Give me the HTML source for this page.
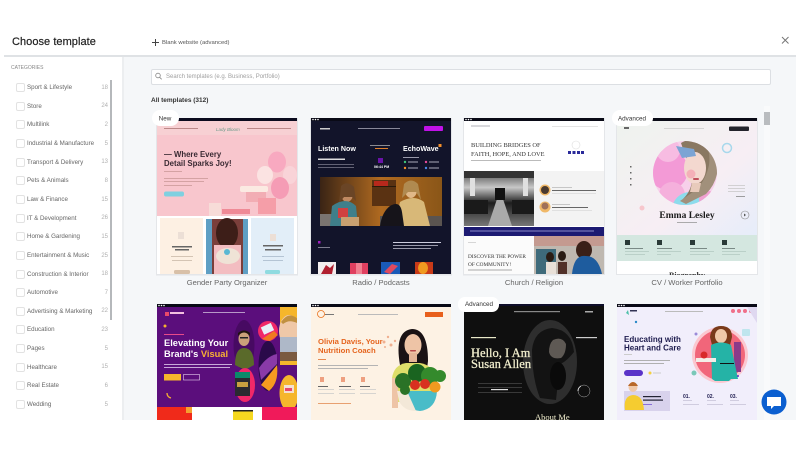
<!DOCTYPE html>
<html><head><meta charset="utf-8"><style>
html,body{margin:0;padding:0;width:800px;height:450px;overflow:hidden;background:#fff;font-family:"Liberation Sans",sans-serif}
#w{position:absolute;left:0;top:0;width:800px;height:450px;filter:blur(.35px)}
.a{position:absolute}
#main{left:124px;top:57px;width:672px;height:363px;background:#f5f7f9}
#rule{left:4px;top:55px;width:792px;height:2px;background:#dfe2e5}
#sidesep{left:122px;top:57px;width:2px;height:363px;background:#eceef0}
#h{left:12px;top:36px;font-size:11px;line-height:13px;color:#222;letter-spacing:.05px;-webkit-text-stroke:.2px #222}
#blank{left:162px;top:38.500px;font-size:5.900px;line-height:8px;color:#555}
#cat{left:11px;top:65px;font-size:5px;line-height:7px;color:#888}
#search{left:151px;top:69px;width:618px;height:14px;background:#fff;border:1px solid #dcdfe3;border-radius:2px}
#search span{position:absolute;left:14px;top:3px;font-size:6px;line-height:8px;color:#a0a0a0}
#all{left:151px;top:96px;font-size:6.500px;line-height:9px;color:#333;font-weight:bold}
.r{position:absolute;left:16px;width:92px;height:9px}
.r i{position:absolute;left:0;top:0;width:7px;height:7px;border:1px solid #e2e2e2;border-radius:2px;background:#fff}
.r b{position:absolute;left:11px;top:0;font-weight:normal;font-size:6.200px;line-height:9px;color:#666;white-space:nowrap}
.r u{position:absolute;right:0;top:.5px;text-decoration:none;font-size:6px;line-height:9px;color:#b0b0b0}
#sb{left:110px;top:80px;width:2px;height:240px;background:#b5b8bb}
.cap{position:absolute;width:140px;text-align:center;font-size:7.600px;line-height:10px;color:#666}
#track{left:764px;top:106px;width:6px;height:314px;background:#f9fafb}
#thumb{left:764px;top:112px;width:6px;height:13px;background:#b9bcbf}
svg{position:absolute;left:0;top:0}
</style></head><body><div id="w">
<div class="a" id="main"></div><div class="a" id="rule"></div><div class="a" id="sidesep"></div>
<div class="a" id="h">Choose template</div>
<div class="a" id="blank">Blank website (advanced)</div>
<svg width="800" height="60" style="z-index:2"><path d="M155.500 39v7M152 42.500h7" stroke="#444" stroke-width="1"/><path d="M782 37l6.500 6.500M788.500 37l-6.500 6.500" stroke="#777" stroke-width="1"/></svg>
<div class="a" id="cat">CATEGORIES</div>
<div class="a" id="search"><span>Search templates (e.g. Business, Portfolio)</span></div>
<svg width="800" height="90" style="z-index:2"><circle cx="158" cy="75.500" r="2.300" fill="none" stroke="#888" stroke-width=".8"/><path d="M159.700 77.300l2 2" stroke="#888" stroke-width=".8"/></svg>
<div class="a" id="all">All templates (312)</div>
<div class="a" id="sb"></div>
<div class="r" style="top:83px"><i></i><b>Sport &amp; Lifestyle</b><u>18</u></div>
<div class="r" style="top:101.500px"><i></i><b>Store</b><u>24</u></div>
<div class="r" style="top:120px"><i></i><b>Multilink</b><u>2</u></div>
<div class="r" style="top:139px"><i></i><b>Industrial &amp; Manufacture</b><u>5</u></div>
<div class="r" style="top:157.500px"><i></i><b>Transport &amp; Delivery</b><u>13</u></div>
<div class="r" style="top:176px"><i></i><b>Pets &amp; Animals</b><u>8</u></div>
<div class="r" style="top:195px"><i></i><b>Law &amp; Finance</b><u>15</u></div>
<div class="r" style="top:213.500px"><i></i><b>IT &amp; Development</b><u>26</u></div>
<div class="r" style="top:232px"><i></i><b>Home &amp; Gardening</b><u>15</u></div>
<div class="r" style="top:251px"><i></i><b>Entertainment &amp; Music</b><u>25</u></div>
<div class="r" style="top:269.500px"><i></i><b>Construction &amp; Interior</b><u>18</u></div>
<div class="r" style="top:288px"><i></i><b>Automotive</b><u>7</u></div>
<div class="r" style="top:306.500px"><i></i><b>Advertising &amp; Marketing</b><u>22</u></div>
<div class="r" style="top:325px"><i></i><b>Education</b><u>23</u></div>
<div class="r" style="top:344px"><i></i><b>Pages</b><u>5</u></div>
<div class="r" style="top:362.500px"><i></i><b>Healthcare</b><u>15</u></div>
<div class="r" style="top:381px"><i></i><b>Real Estate</b><u>6</u></div>
<div class="r" style="top:400px"><i></i><b>Wedding</b><u>5</u></div>
<div class="a" id="track"></div><div class="a" id="thumb"></div>

<svg width="800" height="450">
<defs>
<clipPath id="c6"><rect x="311" y="304" width="140" height="116"/></clipPath>
<clipPath id="c8"><rect x="617" y="304" width="140" height="116"/></clipPath>
<clipPath id="c5"><rect x="157" y="304" width="140" height="116"/></clipPath>
<clipPath id="c7"><rect x="464" y="304" width="140" height="116"/></clipPath>
<clipPath id="c4"><circle cx="685" cy="173" r="32"/></clipPath>
<clipPath id="p2"><rect x="320" y="177" width="122" height="49"/></clipPath>
<linearGradient id="g4" x1="0" y1="0" x2="1" y2="1"><stop offset="0" stop-color="#eef3ee"/><stop offset=".6" stop-color="#f7eef4"/><stop offset="1" stop-color="#e6edfa"/></linearGradient>
<linearGradient id="g2" x1="0" y1="0" x2="1" y2="0"><stop offset="0" stop-color="#3a2415"/><stop offset=".5" stop-color="#b06a20"/><stop offset="1" stop-color="#8a5618"/></linearGradient>
<linearGradient id="gc" x1="0" y1="0" x2="0" y2="1"><stop offset="0" stop-color="#444"/><stop offset=".3" stop-color="#c8c8c8"/><stop offset=".58" stop-color="#1e1e1e"/><stop offset="1" stop-color="#777"/></linearGradient>
</defs>

<g fill="#e4e6e9"><rect x="156" y="118" width="142" height="157.500"/><rect x="310" y="118" width="142" height="157.500"/><rect x="463" y="118" width="142" height="157.500"/><rect x="616" y="118" width="142" height="157.500"/></g>

<!-- Card 1 -->
<rect x="157" y="118" width="140" height="156" fill="#fff"/>
<rect x="157" y="121" width="140" height="95" fill="#f8c6cd"/>
<rect x="157" y="121" width="140" height="14" fill="#f7d0d3"/>
<rect x="157" y="118" width="140" height="3" fill="#0b0b1e"/>
<rect x="164" y="128" width="34" height="1" fill="#b88"/><rect x="247" y="128" width="44" height="1" fill="#b88"/>
<text x="216" y="131" font-size="4.500" fill="#6a9a8a" font-style="italic">Lady Bloom</text>
<text x="164" y="157" font-size="7.800" font-weight="bold" fill="#3a2a33">— Where Every</text>
<text x="164" y="166" font-size="7.800" font-weight="bold" fill="#3a2a33">Detail Sparks Joy!</text>
<rect x="164" y="171" width="18" height=".8" fill="#c99"/>
<rect x="164" y="178" width="44" height=".8" fill="#c99"/><rect x="164" y="181" width="40" height=".8" fill="#c99"/><rect x="164" y="185" width="28" height=".8" fill="#c99"/>
<rect x="164" y="191.500" width="20" height="5" rx="2" fill="#7fd0e0"/>
<ellipse cx="277" cy="162" rx="9" ry="10.500" fill="#f8a9c0"/><ellipse cx="265" cy="175" rx="8" ry="9" fill="#fbe3e2"/><ellipse cx="290" cy="175" rx="7" ry="9" fill="#f9d3d8"/><ellipse cx="280" cy="188" rx="9" ry="11" fill="#f59cb5"/>
<rect x="240" y="186" width="28" height="6" rx="2" fill="#fbeae2"/><rect x="246" y="192" width="20" height="10" fill="#f2adb4"/>
<rect x="258" y="198" width="18" height="16" fill="#f59ea8"/><rect x="209" y="203" width="12" height="13" fill="#f7dcd8"/><rect x="222" y="209" width="28" height="5" fill="#ef8a96"/>
<rect x="160" y="218" width="43" height="56" fill="#fdf0e3"/>
<rect x="206" y="219" width="42" height="55" fill="#7b3f3b"/><rect x="206" y="219" width="6" height="55" fill="#5f9fc4"/><rect x="243" y="219" width="5" height="55" fill="#5f9fc4"/><ellipse cx="227" cy="233" rx="11" ry="15" fill="#3d1e18"/><rect x="214" y="245" width="27" height="29" fill="#f3bdc1"/><ellipse cx="228" cy="256" rx="12" ry="8" fill="#efe3d6"/><circle cx="227" cy="252" r="3" fill="#59b8d3"/>
<rect x="251" y="218" width="43" height="56" fill="#e2eef8"/>
<rect x="172" y="246" width="20" height="1.500" fill="#666"/><rect x="175" y="249" width="14" height="1.500" fill="#666"/><rect x="171" y="256" width="22" height="1" fill="#d4c4b4"/><rect x="172" y="260" width="20" height="1" fill="#d4c4b4"/>
<rect x="174" y="270" width="16" height="4" rx="1.500" fill="#d8c0a8"/>
<rect x="263" y="245" width="20" height="1.500" fill="#666"/><rect x="265" y="249" width="16" height="1.500" fill="#666"/><rect x="262" y="256" width="22" height="1" fill="#b4c4d4"/><rect x="263" y="260" width="20" height="1" fill="#b4c4d4"/>
<rect x="265" y="270" width="15" height="4" rx="1.500" fill="#8fdbe0"/>
<path d="M178 232h6v7h-6zM270 234h6v7h-6z" fill="#ecdfd6"/>

<!-- Card 2 -->
<rect x="311" y="118" width="140" height="156" fill="#12142a"/>
<rect x="311" y="118" width="140" height="3" fill="#090a16"/><circle cx="313" cy="119.500" r=".8" fill="#fff"/><circle cx="315.500" cy="119.500" r=".8" fill="#fff"/><circle cx="318" cy="119.500" r=".8" fill="#fff"/>
<rect x="320" y="128" width="10" height="1.500" fill="#ccc"/><rect x="358" y="128" width="42" height="1" fill="#889"/>
<rect x="424" y="126" width="19" height="5" rx="1" fill="#c012e8"/>
<text x="318" y="151" font-size="7.100" font-weight="bold" fill="#fff">Listen Now</text>
<text x="403" y="151" font-size="7.100" font-weight="bold" fill="#fff">EchoWave</text><rect x="438.500" y="144" width="3" height="3" fill="#f5902a"/>
<rect x="318" y="158.500" width="27" height="1.500" fill="#ddd"/><rect x="318" y="164" width="36" height=".8" fill="#778"/><rect x="318" y="167" width="36" height=".8" fill="#778"/>
<rect x="370" y="145" width="20" height=".8" fill="#aaa"/><rect x="375" y="148" width="13" height="1" fill="#e0802a"/>
<rect x="378" y="158" width="5" height="5" fill="#6a13a8"/><text x="374" y="168" font-size="3.500" fill="#fff" font-weight="bold">06:44 PM</text>
<rect x="403" y="157" width="16" height="1" fill="#99a"/>
<circle cx="405" cy="162" r="1.200" fill="#3fc47a"/><circle cx="405" cy="168" r="1.200" fill="#f5902a"/><circle cx="426" cy="162" r="1.200" fill="#e84a9a"/><circle cx="426" cy="168" r="1.200" fill="#4a8ae8"/>
<rect x="408" y="161.500" width="10" height="1" fill="#aab"/><rect x="408" y="167.500" width="10" height="1" fill="#aab"/><rect x="429" y="161.500" width="10" height="1" fill="#aab"/><rect x="429" y="167.500" width="10" height="1" fill="#aab"/>
<g clip-path="url(#p2)"><rect x="320" y="177" width="122" height="49" fill="url(#g2)"/>
<rect x="372" y="180" width="24" height="26" fill="#5a3212"/><rect x="372" y="186" width="24" height="1" fill="#2a1a0a"/><rect x="374" y="181" width="14" height="5" fill="#b8281c"/>
<rect x="320" y="214" width="36" height="12" fill="#7a7470"/><rect x="380" y="216" width="62" height="10" fill="#5a5450"/>
<ellipse cx="347" cy="194" rx="6" ry="8" fill="#c08a62"/><path d="M341 186q6-6 13 1l2 14-4-4-8 0-5 6z" fill="#6a4526"/><path d="M332 206q14-10 24 0l2 20h-28z" fill="#3f7f8a"/><rect x="338" y="208" width="10" height="10" fill="#d04040"/><rect x="341" y="217" width="18" height="9" fill="#c8a070"/>
<ellipse cx="411" cy="190" rx="6" ry="8" fill="#e0b888"/><path d="M404 184q7-7 14 0l3 16-5-8-8 0-6 6z" fill="#b08a50"/><path d="M400 202q14-8 24 0l6 24h-36z" fill="#d8b878"/><path d="M390 206q10-6 12 6l2 14h-24q2-14 10-20z" fill="#16141a"/>
</g>
<rect x="318" y="241" width="2.500" height="2.500" fill="#a020c0"/><rect x="318" y="247" width="12" height=".8" fill="#99a"/>
<rect x="393" y="242" width="48" height="1" fill="#ccd"/><rect x="393" y="245" width="45" height="1" fill="#99a"/><rect x="393" y="248" width="38" height="1" fill="#99a"/>
<rect x="318" y="262" width="18" height="12" fill="#f3eeee"/><path d="M321 274l5-9 4 3 4-4-2 10z" fill="#b02030"/>
<rect x="350" y="263" width="18" height="11" fill="#e04060"/><rect x="356" y="263" width="6" height="11" fill="#f08090"/>
<rect x="381" y="262" width="19" height="12" fill="#1a5ab8"/><path d="M384 272l8-8 6 2-8 8z" fill="#e04a60"/>
<rect x="415" y="262" width="18" height="12" fill="#c83a18"/><ellipse cx="423" cy="268" rx="5" ry="6" fill="#f09a20"/>

<!-- Card 3 -->
<rect x="464" y="118" width="140" height="156" fill="#fff"/>
<rect x="464" y="118" width="140" height="3" fill="#090a16"/><circle cx="466" cy="119.500" r=".8" fill="#fff"/><circle cx="468.500" cy="119.500" r=".8" fill="#fff"/><circle cx="471" cy="119.500" r=".8" fill="#fff"/>
<rect x="471" y="125.500" width="19" height="1" fill="#b0b0b8"/><rect x="552" y="126" width="46" height=".8" fill="#ddd"/>
<text x="471" y="147" font-family="Liberation Serif" font-size="6.400" fill="#333">BUILDING BRIDGES OF</text>
<text x="471" y="156" font-family="Liberation Serif" font-size="6.400" fill="#333">FAITH, HOPE, AND LOVE</text>
<rect x="471" y="160" width="70" height="1" fill="#bbb"/>
<circle cx="576" cy="145" r="4" fill="none" stroke="#ddd" stroke-width=".6"/>
<g fill="#2a2a9a"><rect x="568" y="151" width="3" height="3"/><rect x="572.500" y="151" width="3" height="3"/><rect x="577" y="151" width="3" height="3"/><rect x="581" y="151" width="3" height="3"/></g>
<rect x="464" y="171" width="70" height="55" fill="url(#gc)"/><rect x="464" y="171" width="70" height="7" fill="#333"/>
<path d="M488 226l10-30h4l10 30z" fill="#aaa"/><rect x="495" y="188" width="10" height="12" fill="#111"/><rect x="464" y="200" width="24" height="14" fill="#1a1a1a"/><rect x="512" y="200" width="22" height="14" fill="#1a1a1a"/><rect x="470" y="178" width="5" height="18" fill="#e0e0e0"/><rect x="523" y="178" width="5" height="18" fill="#e0e0e0"/>
<rect x="534" y="171" width="70" height="55" fill="#f3f3f3"/>
<circle cx="545" cy="190" r="5.500" fill="#f0b868"/><circle cx="545" cy="190" r="4" fill="#4a3a30"/><circle cx="545" cy="207" r="5.500" fill="#f0b868"/><circle cx="545" cy="206" r="3.500" fill="#a07058"/>
<rect x="552" y="187" width="20" height=".8" fill="#bbb"/><rect x="552" y="190" width="44" height="1" fill="#666"/><rect x="552" y="204" width="18" height=".8" fill="#bbb"/><rect x="552" y="207" width="36" height="1" fill="#666"/><rect x="552" y="193.500" width="44" height=".5" fill="#ccc"/><rect x="552" y="210.500" width="40" height=".5" fill="#ccc"/>
<rect x="464" y="227" width="140" height="9" fill="#1c1a72"/><rect x="470" y="230.500" width="124" height="1" fill="#8a8ac8"/>
<rect x="534" y="236" width="70" height="38" fill="#bfb8b0"/><rect x="534" y="236" width="70" height="10" fill="#c49a90"/>
<ellipse cx="584" cy="250" rx="8" ry="9" fill="#3a2018"/><path d="M572 274q2-20 14-18 12 0 16 18z" fill="#1e5c9e"/><rect x="536" y="249" width="20" height="25" fill="#3e6a7a"/><ellipse cx="550" cy="257" rx="4" ry="5" fill="#2a1c14"/><ellipse cx="562" cy="256" rx="4" ry="5" fill="#2a1c14"/><rect x="546" y="262" width="10" height="12" fill="#e8e0d8"/><rect x="558" y="262" width="9" height="12" fill="#503028"/>
<rect x="464" y="236" width="70" height="38" fill="#fbfbfb"/><rect x="468" y="242" width="8" height=".8" fill="#ccc"/>
<text x="468" y="258" font-family="Liberation Serif" font-size="5.300" fill="#333">DISCOVER THE POWER</text>
<text x="468" y="266" font-family="Liberation Serif" font-size="5.300" fill="#333">OF COMMUNITY!</text><rect x="468" y="269.500" width="44" height="1" fill="#aaa"/>

<!-- Card 4 -->
<rect x="617" y="118" width="140" height="156" fill="#fff"/>
<rect x="617" y="121" width="140" height="114" fill="url(#g4)"/>
<rect x="617" y="118" width="140" height="3" fill="#090a16"/>
<rect x="624" y="127" width="5" height="2" fill="#666"/><rect x="664" y="128" width="40" height=".8" fill="#ccc"/><rect x="729" y="126.500" width="20" height="4.500" rx="1" fill="#23232b"/>
<circle cx="685" cy="173" r="32" fill="#f7d0ea"/>
<g clip-path="url(#c4)">
<circle cx="668" cy="170" r="20" fill="#f39ad6"/><circle cx="672" cy="195" r="13" fill="#f5b0dc"/><circle cx="690" cy="210" r="18" fill="#8ddcec"/><circle cx="668" cy="150" r="12" fill="#f7bce2"/><circle cx="708" cy="200" r="9" fill="#f0a0d0"/>
<path d="M694 141h24v26q-1 16-12 27l-20 10-6-3q16-10 14-28z" fill="#a1907b"/>
<path d="M681 143q10-6 22-2 8 8 6 24-3 14-12 24l-14 10q12-12 8-28-6-16-10-28z" fill="#8a7862"/>
<ellipse cx="695" cy="168" rx="11" ry="16" fill="#f3d8cf"/><circle cx="691" cy="174" r="4.500" fill="#f4b0b8"/><rect x="693" y="178" width="6" height="2" rx="1" fill="#c0505c"/><path d="M676 146l18 3 2 7-14 2z" fill="#7ca4d4"/><path d="M692 183h9l-2 9h-9z" fill="#e8cabb"/>
</g>
<circle cx="727" cy="148" r="4.500" fill="none" stroke="#a8d8ec" stroke-width="1.500"/>
<circle cx="642" cy="208" r="2.500" fill="#f7c6cc"/>
<g fill="#666"><rect x="630" y="166" width="1.500" height="1.500"/><rect x="630" y="172" width="1.500" height="1.500"/><rect x="630" y="178" width="1.500" height="1.500"/><rect x="630" y="184" width="1.500" height="1.500"/></g>
<rect x="728" y="185" width="17" height=".7" fill="#c4c4c4"/><rect x="728" y="188" width="17" height=".7" fill="#c4c4c4"/><rect x="728" y="191" width="17" height=".7" fill="#c4c4c4"/><rect x="736" y="196" width="9" height=".8" fill="#888"/>
<circle cx="745" cy="215" r="4" fill="none" stroke="#888" stroke-width=".6"/><path d="M744 213.500l2 1.500-2 1.500z" fill="#555"/>
<text x="687" y="218" text-anchor="middle" font-family="Liberation Serif" font-size="9.500" font-weight="bold" fill="#1b1b1b">Emma Lesley</text><rect x="677" y="222" width="20" height=".8" fill="#999"/>
<rect x="617" y="235" width="140" height="26" fill="#d4e7e0"/>
<g fill="#2a3a38"><rect x="625" y="240" width="5" height="5"/><rect x="657" y="240" width="5" height="5"/><rect x="690" y="240" width="5" height="5"/><rect x="722" y="240" width="5" height="5"/></g>
<g fill="#7a8a86"><rect x="625" y="248" width="18" height="1"/><rect x="657" y="248" width="15" height="1"/><rect x="690" y="248" width="17" height="1"/><rect x="722" y="248" width="13" height="1"/></g>
<g fill="#b4cac2"><rect x="625" y="251" width="24" height=".8"/><rect x="657" y="251" width="24" height=".8"/><rect x="690" y="251" width="24" height=".8"/><rect x="722" y="251" width="24" height=".8"/><rect x="625" y="254" width="20" height=".8"/><rect x="657" y="254" width="14" height=".8"/><rect x="690" y="254" width="20" height=".8"/><rect x="722" y="254" width="18" height=".8"/></g>
<text x="687" y="278" text-anchor="middle" font-family="Liberation Serif" font-size="8" font-weight="bold" fill="#333">Biography</text>
<rect x="600" y="275" width="164" height="30" fill="#f5f7f9"/>
<rect x="764" y="275" width="6" height="30" fill="#f9fafb"/><rect x="770" y="275" width="26" height="30" fill="#f5f7f9"/>

<!-- Card 5 -->
<g clip-path="url(#c5)">
<rect x="157" y="304" width="140" height="116" fill="#5b0e7c"/>
<rect x="157" y="304" width="140" height="3" fill="#090a16"/><circle cx="159" cy="305.500" r=".8" fill="#fff"/><circle cx="161.500" cy="305.500" r=".8" fill="#fff"/><circle cx="164" cy="305.500" r=".8" fill="#fff"/>
<rect x="165" y="312" width="4" height="4" fill="#e84a6a"/><rect x="170" y="312" width="14" height="2" fill="#f3c0e0"/><rect x="203" y="312" width="42" height="1" fill="#b898c8"/>
<circle cx="165" cy="326" r="1.500" fill="#f5b030"/><rect x="164" y="334" width="20" height="1" fill="#e84a8a"/>
<text x="164" y="346" font-size="9.300" font-weight="bold" fill="#fff">Elevating Your</text>
<text x="164" y="357" font-size="9.300" font-weight="bold" fill="#fff">Brand's <tspan fill="#f9b233">Visual</tspan></text>
<rect x="164" y="364" width="68" height="1" fill="#c8a8d8"/><rect x="164" y="367" width="66" height="1" fill="#c8a8d8"/>
<rect x="164" y="374" width="17" height="6.500" fill="#f6b62c"/><rect x="183.500" y="374.500" width="16" height="5.500" fill="none" stroke="#e8d0f0" stroke-width=".6"/>
<path d="M167 393q0 4 4 5" stroke="#f5b030" stroke-width="1.300" fill="none"/>
<ellipse cx="244" cy="345" rx="10.500" ry="25" fill="#470a62"/><ellipse cx="244" cy="339" rx="5.500" ry="7" fill="#caa07a"/><path d="M238 336q6-7 12 0l0-3q-6-5-12 0z" fill="#221410"/><rect x="240" y="337" width="8" height="1.500" fill="#222"/><path d="M235 365q0-17 9-17 10 0 10 17l-9 5z" fill="#5a6a2a"/>
<circle cx="268" cy="331" r="10" fill="#f02868"/><rect x="262" y="325" width="11" height="8" transform="rotate(-25 267 329)" fill="#e8f0f8"/><path d="M262 339l12-8 4 4-8 6z" fill="#f07a20"/>
<ellipse cx="268" cy="366" rx="9.500" ry="25" fill="#2a0a4a"/><path d="M259 368q8-12 18-14v10l-16 16z" fill="#8a3aa8"/><path d="M261 385l16-20q2 18-8 26z" fill="#f59a20"/>
<ellipse cx="245" cy="385" rx="10" ry="17" fill="#f02868"/><rect x="235" y="374" width="15" height="22" fill="#2a2a30"/><rect x="235" y="372" width="15" height="6" fill="#0a8a6a"/><rect x="237" y="382" width="11" height="5" fill="#c8a040"/>
<rect x="280" y="307" width="17" height="58" fill="#f5b62c"/><ellipse cx="289" cy="331" rx="10" ry="16" fill="#efc8a8"/><path d="M281 322q8-12 18-2l-2 3q-8-4-14 1z" fill="#c09040"/><rect x="280" y="337" width="17" height="24" fill="#aeb8c8"/><rect x="280" y="352" width="17" height="9" fill="#7a5a40"/>
<ellipse cx="289" cy="393" rx="9.500" ry="18" fill="#f5b62c"/><rect x="284" y="385" width="10" height="8" fill="#f3e0d0"/><rect x="285" y="388" width="7" height="3" fill="#e84a6a"/>
<rect x="157" y="407" width="35" height="13" fill="#f02a1a"/><rect x="186" y="407" width="6" height="6" fill="#f5a030"/><rect x="192" y="407" width="70" height="13" fill="#fff"/><rect x="233" y="410" width="20" height="10" fill="#f5d820"/><rect x="233" y="410" width="20" height="1.500" fill="#222"/><rect x="262" y="407" width="35" height="13" fill="#f01a5a"/>
</g>

<!-- Card 6 -->
<g clip-path="url(#c6)">
<rect x="311" y="304" width="140" height="116" fill="#fdf2e4"/>
<rect x="311" y="304" width="140" height="3" fill="#090a16"/><circle cx="313" cy="305.500" r=".8" fill="#fff"/><circle cx="315.500" cy="305.500" r=".8" fill="#fff"/><circle cx="318" cy="305.500" r=".8" fill="#fff"/>
<circle cx="321" cy="314" r="3.500" fill="none" stroke="#e8701c" stroke-width=".8"/><rect x="325" y="314" width="9" height="1" fill="#777"/><rect x="358" y="314" width="40" height="1" fill="#bbb"/>
<rect x="425" y="312" width="18" height="5" fill="#e8601c"/>
<text x="318" y="344" font-size="7.700" font-weight="bold" fill="#e5651f">Olivia Davis, Your</text>
<text x="318" y="353" font-size="7.700" font-weight="bold" fill="#e5651f">Nutrition Coach</text>
<rect x="318" y="359" width="8" height="1" fill="#e88a50"/><rect x="318" y="365" width="60" height="1" fill="#b4b4b4"/><rect x="318" y="368" width="50" height="1" fill="#b4b4b4"/>
<g fill="#eea080"><rect x="320" y="377" width="4" height="5"/><rect x="341" y="377" width="4" height="5"/><rect x="361" y="377" width="4" height="5"/></g>
<g fill="#666"><rect x="318" y="386" width="10" height="1"/><rect x="339" y="386" width="12" height="1"/><rect x="360" y="386" width="10" height="1"/></g>
<g fill="#ccc"><rect x="318" y="389" width="16" height=".8"/><rect x="339" y="389" width="16" height=".8"/><rect x="360" y="389" width="16" height=".8"/><rect x="318" y="393" width="16" height=".8"/><rect x="339" y="393" width="16" height=".8"/><rect x="360" y="393" width="16" height=".8"/></g>
<rect x="318" y="403" width="33" height="1" fill="#e8a070"/>
<g fill="#f0b090"><circle cx="384" cy="342" r="1.500"/><circle cx="388" cy="337" r="1.200"/><circle cx="391" cy="345" r="1.500"/><circle cx="395" cy="341" r="1.200"/><circle cx="385" cy="347" r="1"/></g>
<path d="M400 365q-6-34 12-36 16 0 16 32l-1 8h-27z" fill="#1a1214"/>
<ellipse cx="413" cy="345" rx="8.500" ry="11" fill="#eec4a6"/><rect x="409" y="353" width="8" height="9" fill="#e4b496"/><rect x="410" y="350" width="6" height="1.500" rx=".7" fill="#b84848"/>
<path d="M392 378q2-13 14-15h14q12 2 14 12l-4 27h-36z" fill="#dede6a"/>
<rect x="392" y="378" width="6" height="30" fill="#eec4a6"/>
<path d="M402 391h35q-1 18-17 20-17-2-18-20z" fill="#49bcc8"/>
<path d="M397 391h10l9 20q-12 0-17-10z" fill="#f3e8d8"/>
<circle cx="403" cy="381" r="8" fill="#2a7226"/><circle cx="417" cy="373" r="9" fill="#1a6420"/><circle cx="430" cy="376" r="9" fill="#348a2c"/><circle cx="440" cy="376" r="6" fill="#348a2c"/><circle cx="415" cy="385" r="5" fill="#d83020"/><circle cx="425" cy="384" r="5" fill="#d83020"/><circle cx="435" cy="387" r="5.500" fill="#f09a20"/><circle cx="405" cy="390" r="5" fill="#2a7226"/>
</g>

<!-- Card 7 -->
<g clip-path="url(#c7)">
<rect x="464" y="304" width="140" height="116" fill="#0f0f0f"/>
<rect x="464" y="304" width="140" height="2" fill="#0e0e2a"/>
<rect x="514" y="311" width="46" height="1.200" fill="#888"/><rect x="585" y="311" width="8" height="1.500" fill="#aaa"/>
<ellipse cx="550" cy="362" rx="27" ry="42" fill="#2e2e2e"/>
<path d="M532 350q2-20 20-22 20 2 22 24-8 10-14 12l-4 36-16-2q-8-20-8-48z" fill="#131313"/>
<path d="M553 340q9-4 13 4 0 10-5 14-10 2-12-6 0-8 4-12z" fill="#5e5954"/>
<ellipse cx="558" cy="376" rx="8" ry="14" fill="#0a0a0a"/>
<rect x="471" y="337" width="25" height="1.200" fill="#e8e8c8"/><rect x="576" y="337" width="21" height="1.200" fill="#ccc"/>
<text x="471" y="357" font-family="Liberation Serif" font-size="12.500" fill="#f2efce" stroke="#f2efce" stroke-width=".25">Hello, I Am</text>
<text x="471" y="368" font-family="Liberation Serif" font-size="12.500" fill="#f2efce" stroke="#f2efce" stroke-width=".25">Susan Allen</text>
<rect x="478" y="383" width="44" height=".8" fill="#444"/><rect x="478" y="387" width="44" height=".8" fill="#444"/><rect x="491" y="389" width="17" height="1.200" fill="#ddd"/><rect x="478" y="392" width="44" height=".8" fill="#444"/>
<circle cx="584" cy="391" r="6" fill="none" stroke="#aaa" stroke-width=".5"/><path d="M578 391a6 6 0 0 1 3-5" stroke="#ddd" stroke-width="1" fill="none"/>
<text x="535" y="420" font-family="Liberation Serif" font-size="8.500" fill="#f2efce">About Me</text>
</g>

<!-- Card 8 -->
<g clip-path="url(#c8)">
<rect x="617" y="304" width="140" height="116" fill="#f1eefb"/>
<rect x="617" y="304" width="140" height="3" fill="#090a16"/><circle cx="619" cy="305.500" r=".8" fill="#fff"/><circle cx="621.500" cy="305.500" r=".8" fill="#fff"/><circle cx="624" cy="305.500" r=".8" fill="#fff"/>
<path d="M626 313l2-3 1 5z" fill="#4ac0a8"/><rect x="630" y="310" width="7" height="1.500" fill="#335"/><rect x="665" y="311" width="38" height="1" fill="#bbb"/>
<g fill="#f0708a"><circle cx="733" cy="311" r="2"/><circle cx="739" cy="311" r="2"/><circle cx="745" cy="311" r="2"/><circle cx="751" cy="311" r="2"/></g>
<path d="M747 307h10v16z" fill="#dfd8f0"/>
<circle cx="636" cy="322" r="1.200" fill="#2a8ac8"/>
<text x="624" y="342" font-size="8" font-weight="bold" fill="#1d1b4e">Educating with</text>
<text x="624" y="350.500" font-size="8" font-weight="bold" fill="#1d1b4e">Heart and Care</text>
<rect x="624" y="354" width="8" height="1" fill="#ccc"/><rect x="624" y="360" width="46" height="1" fill="#b0b0b0"/><rect x="624" y="363" width="40" height="1" fill="#b0b0b0"/>
<rect x="624" y="370" width="19" height="6" rx="3" fill="#5a33c8"/><circle cx="650" cy="373" r="1.500" fill="#f5d040"/><rect x="653" y="372.500" width="8" height="1" fill="#ccc"/>
<circle cx="720" cy="355" r="28" fill="#fbc8d0"/><circle cx="720" cy="355" r="25" fill="#f1667a"/>
<path d="M721 326q-10 0-11 11l2 8h18l2-8q0-11-11-11z" fill="#7a3a1a"/><ellipse cx="721" cy="336" rx="6" ry="7" fill="#f0c8a8"/><rect x="734" y="342" width="7" height="30" fill="#8a3a8a"/>
<path d="M711 345q10-5 20 0l7 34h-7l-2 2h-14l-3-2z" fill="#25b3a6"/><rect x="696" y="358" width="20" height="4" fill="#f3eee8"/><circle cx="704" cy="355" r="3.500" fill="#d8282a"/><rect x="720" y="363" width="14" height="1" fill="#111"/>
<rect x="742" y="329" width="8" height="7" rx="1" fill="#bfe5ee"/><circle cx="696" cy="334" r="1.500" fill="#9a8ad8"/><circle cx="694" cy="373" r="2.500" fill="#7ac8b8"/><circle cx="738" cy="376" r="1" fill="#5a33c8"/>
<rect x="624" y="391" width="46" height="20" fill="#d8d2ec"/>
<path d="M625 410q-2-14 8-15 10 0 11 15z" fill="#f5cc30"/><ellipse cx="633" cy="387" rx="4.500" ry="5" fill="#f0c8a8"/><path d="M628 386q5-8 10 0z" fill="#b8682a"/>
<rect x="643" y="396" width="18" height="1.200" fill="#223"/><rect x="643" y="399.500" width="20" height="1.200" fill="#223"/><rect x="643" y="404" width="9" height="1" fill="#8a70d8"/>
<text x="683" y="398" font-size="5" font-weight="bold" fill="#1d1b4e">01.</text><text x="707" y="398" font-size="5" font-weight="bold" fill="#1d1b4e">02.</text><text x="730" y="398" font-size="5" font-weight="bold" fill="#1d1b4e">03.</text>
<g fill="#c8c4d8"><rect x="683" y="400" width="9" height=".8"/><rect x="707" y="400" width="9" height=".8"/><rect x="730" y="400" width="9" height=".8"/><rect x="683" y="404" width="16" height=".8"/><rect x="707" y="404" width="16" height=".8"/><rect x="730" y="404" width="16" height=".8"/></g>
</g>

<!-- Badges -->
<rect x="152" y="110" width="27" height="16" rx="8" fill="#fff"/>
<text x="165" y="120.500" text-anchor="middle" font-size="6.300" fill="#333">New</text>
<rect x="612" y="110" width="41" height="16" rx="8" fill="#fff"/>
<text x="632" y="120.500" text-anchor="middle" font-size="6.300" fill="#333">Advanced</text>
<rect x="458" y="297" width="41" height="15" rx="7" fill="#fff"/>
<text x="479" y="306" text-anchor="middle" font-size="6.300" fill="#333">Advanced</text>

<!-- Chat -->
<circle cx="774" cy="402" r="12.500" fill="#0b5fd0"/>
<path d="M767 397h14v9h-7l-3 3v-3h-4z" fill="#fff"/>
</svg>

<div class="cap" style="left:157px;top:278px">Gender Party Organizer</div>
<div class="cap" style="left:311px;top:278px">Radio / Podcasts</div>
<div class="cap" style="left:464px;top:278px">Church / Religion</div>
<div class="cap" style="left:617px;top:278px">CV / Worker Portfolio</div>
</div></body></html>
